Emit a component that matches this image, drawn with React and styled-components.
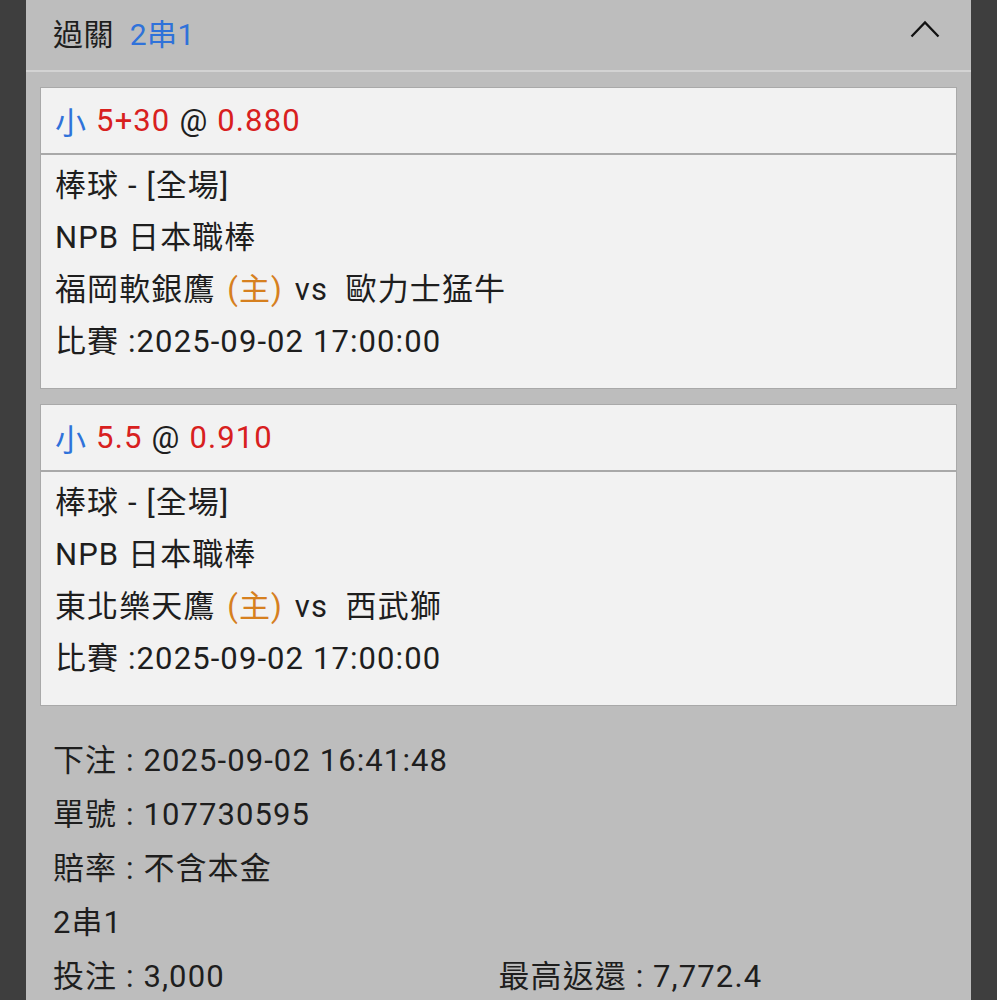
import React from "react";
import styled, { createGlobalStyle } from "styled-components";

const GlobalStyle = createGlobalStyle`
  html, body {
    margin: 0;
    padding: 0;
    background: #3e3e3e;
  }
  body {
    font-family: Roboto, "Noto Sans CJK TC", "Noto Sans", sans-serif;
    color: #1e1e1e;
    letter-spacing: 1.1px;
  }
`;

const Page = styled.div`
  display: flex;
  justify-content: flex-start;
  padding-left: 26px;
  min-height: 1000px;
`;

const Panel = styled.div`
  width: 945px;
  background: #bdbdbd;
`;

const Header = styled.div`
  height: 64px;
  display: flex;
  align-items: center;
  justify-content: space-between;
  padding: 0 31px 6px 27px;
  border-bottom: 2px solid #d3d3d3;
  font-size: 30px;
  letter-spacing: 0.4px;
`;

const Title = styled.div`
  display: flex;
  gap: 16px;
`;

const Blue = styled.span`
  color: #2f72da;
`;

const Red = styled.span`
  color: #d8201e;
`;

const Orange = styled.span`
  color: #d6801f;
  margin: 0 3px;
`;

const Cards = styled.div`
  display: flex;
  flex-direction: column;
  gap: 15px;
  padding: 15px 14px 0;
`;

const Card = styled.div`
  background: #f2f2f2;
  border: 1px solid #a9a9a9;
`;

const CardHead = styled.div`
  height: 65px;
  display: flex;
  align-items: center;
  gap: 9px;
  padding: 0 14px;
  border-bottom: 2px solid #a9a9a9;
  font-size: 31px;
`;

const CardBody = styled.div`
  padding: 5px 14px 20px;
  font-size: 31px;
  line-height: 52px;
`;

const Line = styled.div`
  white-space: pre;
`;

const Summary = styled.div`
  display: grid;
  grid-template-columns: 1fr 1fr;
  padding: 28px 27px 0;
  font-size: 31px;
  line-height: 54px;
`;

const Full = styled.div`
  grid-column: 1 / -1;
`;

const ChevronBox = styled.svg`
  margin-bottom: 6px;
`;

const Chevron = () => (
  <ChevronBox width="30" height="18" viewBox="0 0 30 18">
    <path d="M1.5 16.5 L15 2.5 L28.5 16.5" fill="none" stroke="#111" strokeWidth="2.3" />
  </ChevronBox>
);

const bets = [
  {
    pick: "5+30",
    odds: "0.880",
    home: "福岡軟銀鷹",
    away: "歐力士猛牛",
  },
  {
    pick: "5.5",
    odds: "0.910",
    home: "東北樂天鷹",
    away: "西武獅",
  },
];

const BetCard = ({ pick, odds, home, away }) => (
  <Card>
    <CardHead>
      <Blue>小</Blue>
      <Red>{pick}</Red>
      <span>@</span>
      <Red>{odds}</Red>
    </CardHead>
    <CardBody>
      <Line>棒球 - [全場]</Line>
      <Line>NPB 日本職棒</Line>
      <Line>
        {home} <Orange>(主)</Orange> vs  {away}
      </Line>
      <Line>比賽 :2025-09-02 17:00:00</Line>
    </CardBody>
  </Card>
);

export default function App() {
  return (
    <>
      <GlobalStyle />
      <Page>
        <Panel>
          <Header>
            <Title>
              <span>過關</span>
              <Blue>2串1</Blue>
            </Title>
            <Chevron />
          </Header>
          <Cards>
            {bets.map((b) => (
              <BetCard key={b.pick} {...b} />
            ))}
          </Cards>
          <Summary>
            <Full>下注 : 2025-09-02 16:41:48</Full>
            <Full>單號 : 107730595</Full>
            <Full>賠率 : 不含本金</Full>
            <Full>2串1</Full>
            <div>投注 : 3,000</div>
            <div>最高返還 : 7,772.4</div>
          </Summary>
        </Panel>
      </Page>
    </>
  );
}
